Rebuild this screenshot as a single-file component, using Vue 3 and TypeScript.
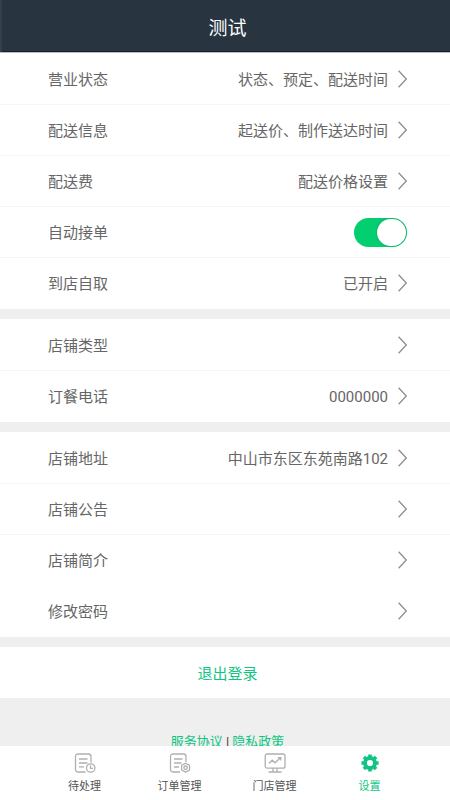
<script setup lang="ts">
import { ref } from 'vue'

interface Row {
  label: string
  value?: string
  toggle?: boolean
  divider?: boolean
}

interface Tab {
  label: string
  icon: 'pending' | 'orders' | 'store' | 'settings'
}

const sections: Row[][] = [
  [
    { label: '营业状态', value: '状态、预定、配送时间', divider: true },
    { label: '配送信息', value: '起送价、制作送达时间', divider: true },
    { label: '配送费', value: '配送价格设置', divider: true },
    { label: '自动接单', toggle: true, divider: true },
    { label: '到店自取', value: '已开启' },
  ],
  [
    { label: '店铺类型', divider: true },
    { label: '订餐电话', value: '0000000' },
  ],
  [
    { label: '店铺地址', value: '中山市东区东苑南路102', divider: true },
    { label: '店铺公告', divider: true },
    { label: '店铺简介' },
    { label: '修改密码' },
  ],
]

const tabs: Tab[] = [
  { label: '待处理', icon: 'pending' },
  { label: '订单管理', icon: 'orders' },
  { label: '门店管理', icon: 'store' },
  { label: '设置', icon: 'settings' },
]

const autoAccept = ref(true)
const activeTab = ref<Tab['icon']>('settings')
</script>

<template>
  <div class="app">
    <header class="header">
      <h1 class="title">测试</h1>
    </header>

    <main class="content">
      <section v-for="(rows, index) in sections" :key="index" class="section">
        <template v-for="row in rows" :key="row.label">
          <div v-if="row.toggle" class="row" :class="{ divider: row.divider }">
            <label class="text" for="auto-accept">{{ row.label }}</label>
            <input id="auto-accept" v-model="autoAccept" class="switch" type="checkbox" role="switch" />
          </div>
          <button v-else type="button" class="row" :class="{ divider: row.divider }">
            <span class="text">{{ row.label }}</span>
            <span class="detail">
              <span class="text">{{ row.value }}</span>
              <svg class="chevron" viewBox="0 0 9 18" aria-hidden="true">
                <path d="M0.6 0.8L8.3 9L0.6 17.2" />
              </svg>
            </span>
          </button>
        </template>
      </section>

      <button type="button" class="logout">退出登录</button>

      <p class="legal">
        <a href="#terms">服务协议</a> | <a href="#privacy">隐私政策</a>
      </p>
    </main>

    <nav class="tabs">
      <button
        v-for="tab in tabs"
        :key="tab.icon"
        type="button"
        class="tab"
        :class="{ active: tab.icon === activeTab }"
        @click="activeTab = tab.icon"
      >
        <svg class="icon" viewBox="0 0 22 20" aria-hidden="true">
          <g v-if="tab.icon === 'pending'">
            <path d="M11.5 19H4Q1.5 19 1.5 16.5V3.5Q1.5 1 4 1H14.5Q17 1 17 3.5V9.5" />
            <path d="M5 6H13.5M5 10H13.5M5 13.8H10" />
            <circle cx="16.7" cy="15" r="4.2" />
            <path d="M16.5 12.5V15.3H19" />
          </g>
          <g v-else-if="tab.icon === 'orders'">
            <path d="M11 19H4Q1.5 19 1.5 16.5V3.5Q1.5 1 4 1H14.5Q17 1 17 3.5V9" />
            <path d="M5 6H13.5M5 10H12.5M5 14H10" />
            <path d="M16.6 10.2L18.2 11.2L20.2 11.9L20.6 13.4V16L20.2 17.5L18.2 18.2L16.6 19.2L15 18.2L13 17.5L12.6 16V13.4L13 11.9L15 11.2Z" />
            <circle cx="16.6" cy="14.7" r="1.7" />
          </g>
          <g v-else-if="tab.icon === 'store'">
            <rect x="1.2" y="1" width="19.8" height="14.2" rx="2" />
            <path d="M5 10.5L8.2 7.2L11 9.8L16.5 4.8M13.8 4.6H16.8V7.5" />
            <path d="M9 15.2V18.8M13 15.2V18.8M4.5 19H17.5" />
          </g>
          <g v-else class="gear">
            <circle cx="11" cy="10" r="5" stroke-width="3.8" />
            <path
              stroke-width="3.6"
              d="M11 1.4V4M11 16V18.6M2.4 10H5M17 10H19.6M4.9 3.9L6.8 5.8M15.2 14.2L17.1 16.1M17.1 3.9L15.2 5.8M6.8 14.2L4.9 16.1"
            />
          </g>
        </svg>
        <span>{{ tab.label }}</span>
      </button>
    </nav>
  </div>
</template>

<style>
body {
  margin: 0;
  background: #efefef;
}
</style>

<style scoped>
.app {
  display: flex;
  flex-direction: column;
  height: 100vh;
  background: #efefef;
  color: #666;
  font-family: Roboto, "Noto Sans CJK SC", sans-serif;
  font-size: 15px;
  line-height: 20px;
}

button {
  margin: 0;
  padding: 0;
  border: 0;
  background: #fff;
  color: inherit;
  font: inherit;
  cursor: pointer;
}

.header {
  flex: none;
  box-sizing: border-box;
  height: 53px;
  padding: 4px 0 0 5px;
  border-bottom: 1px solid #b9bdc0;
  background: #283541;
  box-shadow: inset 2px 0 #34414c, inset 0 -1px #14212c;
}

.title {
  margin: 0;
  color: #fff;
  font-size: 19px;
  font-weight: 400;
  line-height: 50px;
  text-align: center;
}

.content {
  flex: 1;
  min-height: 0;
  overflow-y: auto;
  scrollbar-width: none;
}

.section {
  margin-bottom: 10px;
  padding-top: 1px;
  background: #fff;
}

.row {
  box-sizing: border-box;
  display: flex;
  align-items: center;
  justify-content: space-between;
  width: 100%;
  height: 51px;
  padding: 0 43px 0 48px;
  border-bottom: 1px solid transparent;
  text-align: left;
}

.row.divider {
  border-bottom-color: #f5f5f5;
}

.text {
  padding-top: 2px;
}

.detail {
  display: flex;
  align-items: center;
  gap: 10px;
}

.chevron {
  width: 9px;
  height: 18px;
  fill: none;
  stroke: #8f8f8f;
  stroke-width: 1.3;
}

.switch {
  appearance: none;
  box-sizing: border-box;
  width: 53px;
  height: 29px;
  margin: 0;
  padding: 1px;
  border-radius: 15px;
  background: #ccc;
  cursor: pointer;
}

.switch::before {
  content: "";
  display: block;
  width: 29px;
  height: 27px;
  border-radius: 14px;
  background: #fff;
  box-shadow: 0 0 2px rgba(0, 60, 30, 0.4);
}

.switch:checked {
  background: #04cf70;
}

.switch:checked::before {
  margin-left: auto;
}

.logout {
  display: block;
  width: 100%;
  height: 51px;
  padding: 2px 0 0 5px;
  color: #10c583;
}

.legal {
  margin: 0;
  padding: 34px 0 0 5px;
  color: #333;
  font-size: 13px;
  text-align: center;
}

.legal a {
  color: #10c583;
  text-decoration: none;
}

.tabs {
  flex: none;
  display: grid;
  grid-template-columns: repeat(4, 1fr);
  height: 54px;
  padding: 0 33px 0 37px;
  background: #fff;
}

.tab {
  display: flex;
  flex-direction: column;
  align-items: center;
  gap: 6px;
  padding-top: 7px;
  color: #555;
  font-size: 11px;
  line-height: 16px;
}

.tab.active {
  color: #10c583;
}

.icon {
  width: 22px;
  height: 20px;
  fill: none;
  stroke: #b0b0b0;
  stroke-width: 1.3;
}

.icon .gear {
  stroke: #10c583;
}
</style>
